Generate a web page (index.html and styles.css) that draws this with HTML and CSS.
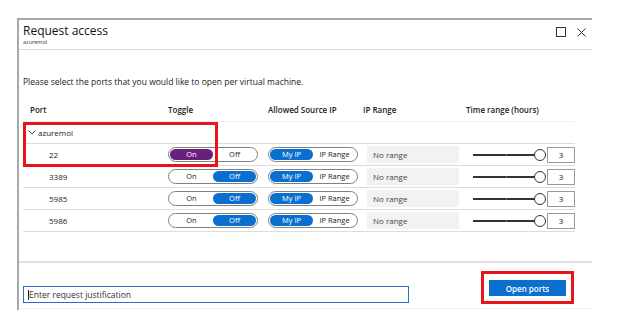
FILE: index.html
```html
<!DOCTYPE html>
<html lang="en">
<head>
  <meta charset="UTF-8">
  <meta name="viewport" content="width=device-width, initial-scale=1.0">
  <title>Request access</title>
  <link rel="stylesheet" href="styles.css">
</head>
<body>
  <div class="panel">
    <div class="panel-header">
      <div class="titles">
        <div class="title">Request access</div>
        <div class="subtitle">azuremol</div>
      </div>
      <div class="window-buttons">
        <span class="max-btn"></span>
        <svg class="close-btn" width="9" height="9" viewBox="0 0 9 9"><path d="M0.5 0.5 L8.5 8.5 M8.5 0.5 L0.5 8.5" stroke="#333" stroke-width="1" fill="none"/></svg>
      </div>
    </div>

    <div class="content">
      <p class="intro">Please select the ports that you would like to open per virtual machine.</p>

      <div class="table">
        <div class="head-row">
          <span class="h-port">Port</span>
          <span>Toggle</span>
          <span>Allowed Source IP</span>
          <span>IP Range</span>
          <span>Time range (hours)</span>
        </div>

        <div class="group-row">
          <svg class="chevron" width="8" height="5" viewBox="0 0 8 5"><path d="M0.5 0.5 L4 4 L7.5 0.5" stroke="#333" stroke-width="0.9" fill="none"/></svg>
          azuremol
        </div>

        <div class="row">
          <span class="port">22</span>
          <div class="pill"><span class="seg seg-purple">On</span><span class="seg">Off</span></div>
          <div class="pill"><span class="seg seg-blue">My IP</span><span class="seg">IP Range</span></div>
          <div class="range">No range</div>
          <div class="time"><div class="slider"><span class="track"></span><span class="thumb"></span></div><div class="hours">3</div></div>
        </div>
        <div class="row">
          <span class="port">3389</span>
          <div class="pill"><span class="seg">On</span><span class="seg seg-blue">Off</span></div>
          <div class="pill"><span class="seg seg-blue">My IP</span><span class="seg">IP Range</span></div>
          <div class="range">No range</div>
          <div class="time"><div class="slider"><span class="track"></span><span class="thumb"></span></div><div class="hours">3</div></div>
        </div>
        <div class="row">
          <span class="port">5985</span>
          <div class="pill"><span class="seg">On</span><span class="seg seg-blue">Off</span></div>
          <div class="pill"><span class="seg seg-blue">My IP</span><span class="seg">IP Range</span></div>
          <div class="range">No range</div>
          <div class="time"><div class="slider"><span class="track"></span><span class="thumb"></span></div><div class="hours">3</div></div>
        </div>
        <div class="row">
          <span class="port">5986</span>
          <div class="pill"><span class="seg">On</span><span class="seg seg-blue">Off</span></div>
          <div class="pill"><span class="seg seg-blue">My IP</span><span class="seg">IP Range</span></div>
          <div class="range">No range</div>
          <div class="time"><div class="slider"><span class="track"></span><span class="thumb"></span></div><div class="hours">3</div></div>
        </div>

        <div class="mark mark-rows"></div>
      </div>
    </div>

    <div class="footer">
      <div class="justification"><span class="caret"></span>Enter request justification</div>
      <div class="open-wrap">
        <button class="open-btn">Open ports</button>
      </div>
    </div>
  </div>
</body>
</html>
```

FILE: styles.css
```css
body {
  margin: 0;
  background: #fff;
  font-family: "Open Sans", "Noto Sans", sans-serif;
  color: #222;
}
.panel {
  margin: 18px 0 0 17px;
  width: 575px;
  height: 292px;
  border-top: 2px solid #a8a8a8;
  border-left: 2px solid #a8a8a8;
  box-sizing: border-box;
  display: flex;
  flex-direction: column;
}
.panel-header {
  height: 29px;
  border-bottom: 1px solid #d9d9d9;
  display: flex;
  justify-content: space-between;
  align-items: flex-start;
  padding: 0 0 0 4px;
}
.title {
  font-size: 12px;
  line-height: 15px;
  margin-top: 3px;
  color: #111;
}
.subtitle {
  font-size: 5.5px;
  line-height: 7px;
  margin-top: 1px;
  color: #333;
}
.window-buttons {
  display: flex;
  align-items: center;
  gap: 11px;
  margin: 7px 6px 0 0;
}
.max-btn {
  width: 8px;
  height: 8px;
  border: 1px solid #333;
}
.content {
  padding: 0 0 0 4px;
}
.intro {
  margin: 26px 0 0;
  font-size: 8.5px;
  line-height: 12px;
}
.table {
  position: relative;
  width: 552px;
  margin-top: 10px;
  font-size: 8px;
}
.head-row {
  display: grid;
  grid-template-columns: 145px 100px 95px 103px 1fr;
  height: 23px;
  align-items: center;
  border-bottom: 1px solid #f0f0f0;
  font-weight: 600;
  color: #222;
}
.h-port {
  padding-left: 7px;
}
.group-row {
  height: 21px;
  display: flex;
  align-items: center;
  gap: 2px;
  padding-left: 5px;
  border-bottom: 1px solid #dcdcdc;
}
.row {
  display: grid;
  grid-template-columns: 145px 100px 99px 106px 1fr;
  height: 21px;
  align-items: center;
  border-bottom: 1px solid #dcdcdc;
}
.port {
  padding-left: 26px;
}
.pill {
  width: 90px;
  height: 15px;
  border: 1px solid #808080;
  border-radius: 8px;
  box-sizing: border-box;
  padding: 1px;
  display: flex;
}
.seg {
  flex: 1;
  border-radius: 6px;
  text-align: center;
  line-height: 11px;
  font-size: 7.5px;
  color: #222;
}
.seg-purple {
  background: #68217a;
  color: #fff;
}
.seg-blue {
  background: #0a6fcf;
  color: #fff;
}
.range {
  width: 92px;
  height: 17px;
  background: #f2f2f2;
  line-height: 17px;
  padding-left: 6px;
  box-sizing: border-box;
  color: #444;
}
.time {
  display: flex;
  align-items: center;
}
.slider {
  position: relative;
  width: 72px;
  height: 12px;
}
.track {
  position: absolute;
  left: 0;
  top: 5px;
  width: 63px;
  height: 2px;
  background: linear-gradient(to right, #333 33px, #777 33px, #777 34px, #333 34px);
}
.thumb {
  position: absolute;
  left: 61px;
  top: 0;
  width: 10px;
  height: 10px;
  border: 1px solid #333;
  border-radius: 50%;
  background: #fff;
}
.hours {
  width: 28px;
  height: 16px;
  border: 1px solid #9a9a9a;
  box-sizing: border-box;
  text-align: center;
  line-height: 14px;
  margin-left: 2px;
}
.mark {
  position: absolute;
  border: 3px solid #e8141c;
  box-sizing: border-box;
  pointer-events: none;
}
.mark-rows {
  left: 0;
  top: 24px;
  width: 195px;
  height: 45px;
}
.footer {
  margin-top: auto;
  height: 45px;
  border-top: 2px solid #dedede;
  border-bottom: 1px solid #f0f0f0;
  display: flex;
  align-items: flex-start;
  padding-left: 4px;
  margin-bottom: 1px;
}
.justification {
  margin-top: 23px;
  width: 386px;
  height: 17px;
  border: 1.5px solid #2f6fc8;
  box-sizing: border-box;
  font-size: 8.5px;
  line-height: 14px;
  padding-left: 4px;
  color: #333;
  display: flex;
  align-items: center;
}
.caret {
  width: 1px;
  height: 10px;
  background: #222;
}
.open-wrap {
  margin: 8px 0 0 72px;
  border: 3px solid #e8141c;
  padding: 6px 5px 5px 5px;
}
.open-btn {
  display: block;
  width: 77px;
  height: 16px;
  border: none;
  background: #0a6fcf;
  color: #fff;
  font-family: "Open Sans", sans-serif;
  font-size: 8px;
  font-weight: 600;
  padding: 0;
}
```
